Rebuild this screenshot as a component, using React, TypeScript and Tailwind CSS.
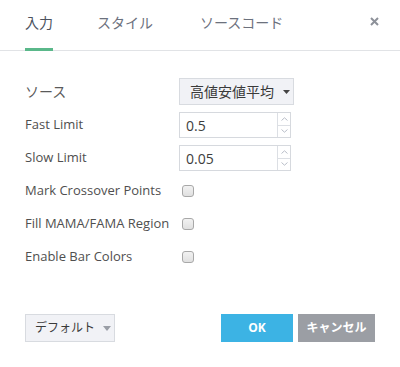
import React from 'react';

const font = { fontFamily: '"Open Sans", "Noto Sans CJK JP", sans-serif' };

function NumberField({ value }: { value: string }) {
  return (
    <div className="flex h-[26px] w-[112px] border border-[#d6d9de] bg-white">
      <div className="flex flex-1 items-center pl-[6px] text-[14px] text-[#3d3d3d]">{value}</div>
      <div className="flex w-[13px] flex-col border-l border-[#dcdfe4]">
        <div className="flex flex-1 items-center justify-center border-b border-[#dcdfe4]">
          <svg width="7" height="4" viewBox="0 0 7 4">
            <path d="M0.5 3.5 L3.5 0.8 L6.5 3.5" fill="none" stroke="#b9bec8" strokeWidth="1" />
          </svg>
        </div>
        <div className="flex flex-1 items-center justify-center">
          <svg width="7" height="4" viewBox="0 0 7 4">
            <path d="M0.5 0.5 L3.5 3.2 L6.5 0.5" fill="none" stroke="#b9bec8" strokeWidth="1" />
          </svg>
        </div>
      </div>
    </div>
  );
}

function Check() {
  return (
    <div className="ml-[3px] h-[12px] w-[12px] rounded-[3px] border border-[#a8a8a8] bg-gradient-to-b from-[#f2f2f2] to-[#e0e0e0]" />
  );
}

function Row({ label, children }: { label: string; children: React.ReactNode }) {
  return (
    <div className="flex h-[26px] items-center">
      <div className="w-[154px] text-[13px] text-[#4f4f4f]">{label}</div>
      {children}
    </div>
  );
}

export default function App() {
  return (
    <div className="flex h-[367px] w-[400px] flex-col bg-white" style={font}>
      {/* tabs */}
      <div className="flex h-[51px] shrink-0 border-b border-[#e1e3e6] pl-[25px]">
        <div className="relative flex h-[50px] items-center pb-[5px] text-[14px] text-[#4c525e]">
          入力
          <span className="absolute bottom-[-1px] left-0 h-[3px] w-full bg-[#5ab88a]" />
        </div>
        <div className="ml-[44px] flex h-[50px] items-center pb-[5px] text-[14px] text-[#6c717d]">スタイル</div>
        <div className="ml-[47px] flex h-[50px] items-center pb-[5px] text-[14px] text-[#6c717d]">ソースコード</div>
        <div className="ml-auto mr-[21px] flex h-[50px] items-center pb-[8px]">
          <svg width="9" height="9" viewBox="0 0 9 9">
            <path d="M1 1 L8 8 M8 1 L1 8" stroke="#8d9199" strokeWidth="2" />
          </svg>
        </div>
      </div>

      {/* body */}
      <div className="flex flex-col gap-[7px] pl-[25px] pt-[27px]">
        <div className="flex h-[27px] items-center">
          <div className="w-[154px] text-[14px] text-[#5a5a5a]">ソース</div>
          <div className="flex h-[27px] w-[115px] items-center whitespace-nowrap border border-[#d8dbe0] bg-[#f1f2f6] pl-[10px] text-[14px] text-[#3a3a3a]">
            高値安値平均
            <svg className="ml-[9px]" width="7" height="4" viewBox="0 0 7 4">
              <path d="M0 0 H7 L3.5 4 Z" fill="#444" />
            </svg>
          </div>
        </div>
        <Row label="Fast Limit">
          <NumberField value="0.5" />
        </Row>
        <Row label="Slow Limit">
          <NumberField value="0.05" />
        </Row>
        <Row label="Mark Crossover Points">
          <Check />
        </Row>
        <Row label="Fill MAMA/FAMA Region">
          <Check />
        </Row>
        <Row label="Enable Bar Colors">
          <Check />
        </Row>
      </div>

      {/* footer */}
      <div className="mt-auto flex items-center justify-between px-[25px] pb-[25px]">
        <div className="flex h-[28px] w-[90px] items-center whitespace-nowrap border border-[#d8dbe0] bg-[#f1f2f6] pl-[9px] text-[12px] text-[#3a3a3a]">
          デフォルト
          <svg className="ml-[8px]" width="8" height="5" viewBox="0 0 8 5">
            <path d="M0 0 H8 L4 5 Z" fill="#9a9ea6" />
          </svg>
        </div>
        <div className="flex gap-[5px]">
          <button className="flex h-[28px] w-[72px] items-center justify-center bg-[#3cb3e4] text-[12px] font-bold text-white">
            OK
          </button>
          <button className="flex h-[28px] w-[77px] items-center justify-center whitespace-nowrap bg-[#9b9ea4] text-[12px] font-bold text-white">
            キャンセル
          </button>
        </div>
      </div>
    </div>
  );
}
